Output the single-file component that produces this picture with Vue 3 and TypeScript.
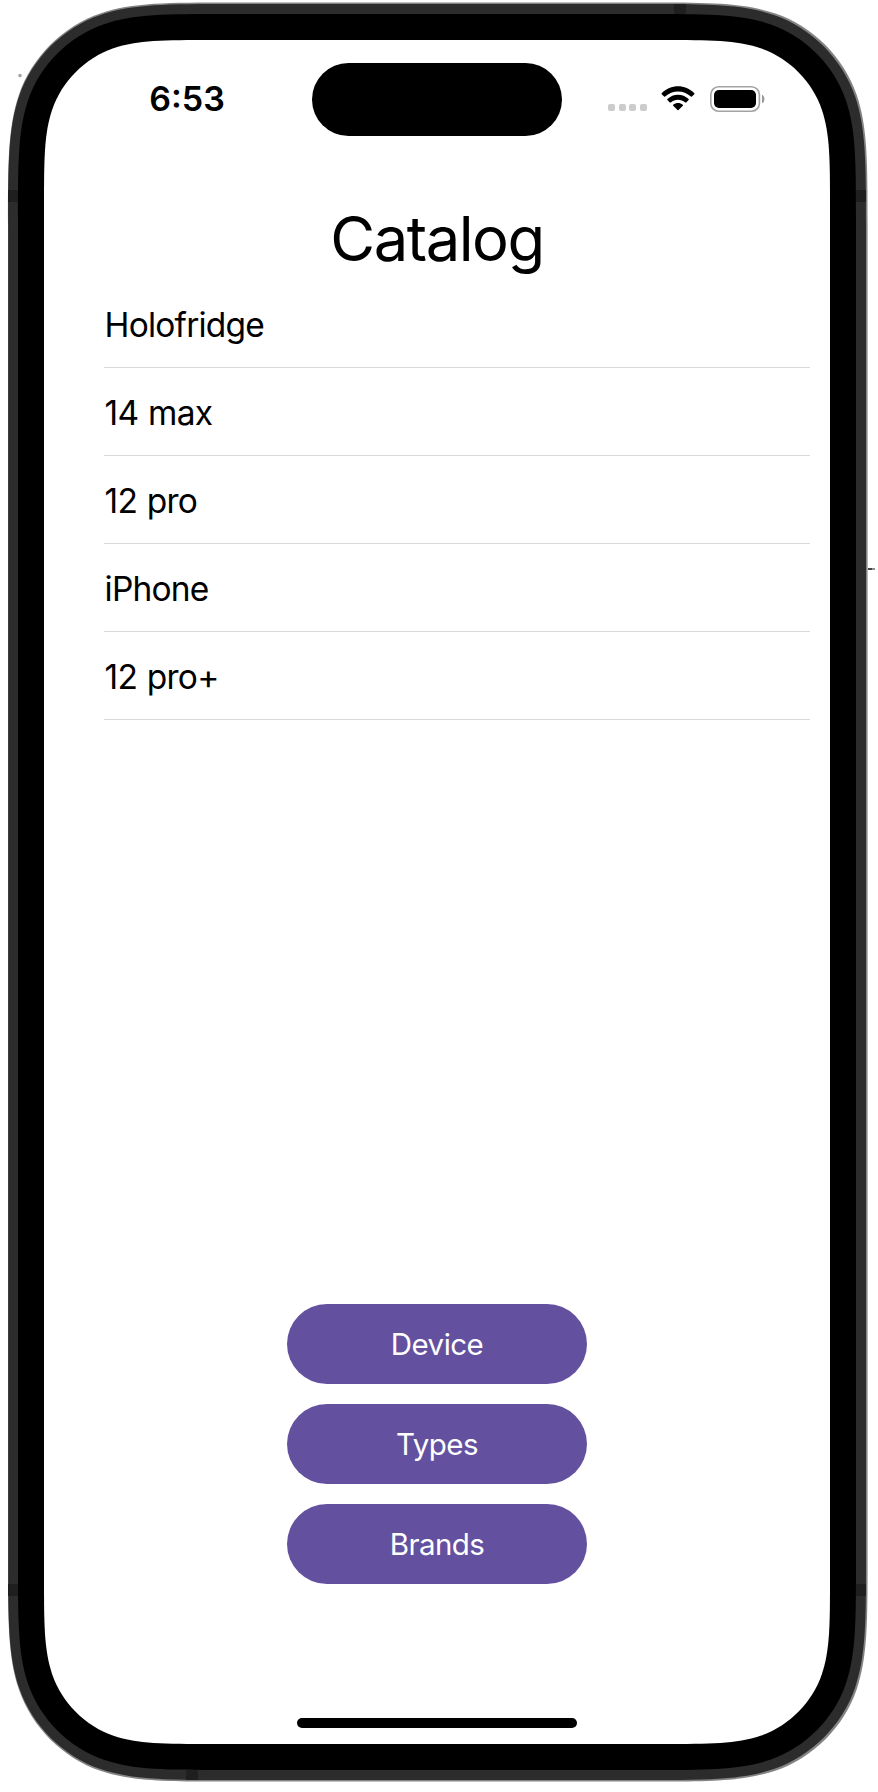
<script setup lang="ts">
interface Box { left: number; top: number; right: number; bottom: number }

const items: string[] = ['Holofridge', '14 max', '12 pro', 'iPhone', '12 pro+']
const actions: string[] = ['Device', 'Types', 'Brands']

// Continuous-curvature corner, expressed in multiples of the radius
// as [distance along the edge, distance away from the edge].
const corner: [number, number][] = [
  [1.52866, 0], [1.08849, 0], [0.8518, 0], [0.63149, 0.07491],
  [0.375, 0.1621], [0.1621, 0.375], [0.07491, 0.63149],
  [0, 0.8518], [0, 1.08849], [0, 1.52866],
]

function smoothRect(b: Box, r: number): string {
  const place = (sx: number, sy: number, flip: boolean): string[] => {
    const pts = flip ? [...corner].reverse() : corner
    return pts.map(([u, v]) => {
      const x = sx > 0 ? b.left + u * r : b.right - u * r
      const y = sy > 0 ? b.top + v * r : b.bottom - v * r
      return `${x.toFixed(2)} ${y.toFixed(2)}`
    })
  }
  const curve = (p: string[]): string => `${p[0]} C${p.slice(1).join(' ')}`
  return (
    `M${curve(place(1, 1, true))} L${curve(place(-1, 1, false))} ` +
    `L${curve(place(-1, -1, true))} L${curve(place(1, -1, false))} Z`
  )
}

const rim = smoothRect({ left: 8, top: 2.6, right: 867.6, bottom: 1781.6 }, 146)
const body = smoothRect({ left: 8.2, top: 4, right: 866, bottom: 1780 }, 146)
const bezel = smoothRect({ left: 18, top: 14, right: 856, bottom: 1770 }, 136)
const glass = smoothRect({ left: 44, top: 40, right: 830, bottom: 1744 }, 110)
</script>

<template>
  <main class="stage">
    <svg class="device" width="878" height="1792" viewBox="0 0 878 1792" aria-hidden="true">
      <circle cx="20" cy="75.6" r="1.8" fill="#a5a5a5" />
      <rect x="868" y="568" width="4" height="2" fill="#454545" />
      <rect x="872" y="568" width="3" height="2" fill="#909090" />
      <path :d="rim" fill="#858383" />
      <path :d="body" fill="#2c2c2c" />
      <g fill="#1f1f1f">
        <rect x="8" y="190" width="10" height="12" />
        <rect x="856" y="190" width="10" height="12" />
        <rect x="8" y="1584" width="10" height="12" />
        <rect x="856" y="1584" width="10" height="12" />
        <rect x="674" y="4" width="12" height="10" />
        <rect x="186" y="1770" width="12" height="10" />
      </g>
      <path :d="bezel" fill="#000" />
      <path :d="glass" fill="#fff" />
    </svg>

    <section class="screen">
      <header class="status">
        <span class="time">6:53</span>
        <span class="island"></span>
        <span class="indicators">
          <span class="signal"><i v-for="n in 4" :key="n"></i></span>
          <svg class="wifi" width="34" height="26" viewBox="0 0 34 26">
            <path d="M0.7 7.2 C9.6 -2 24.4 -2 33.3 7.2 Q33.7 7.7 33.3 8.2 L30.9 10.6 Q30.4 11 29.9 10.6 C22.7 3.7 11.3 3.7 4.1 10.6 Q3.6 11 3.1 10.6 L0.7 8.2 Q0.3 7.7 0.7 7.2 Z" />
            <path d="M6.4 13.1 C12.3 7.4 21.7 7.4 27.6 13.1 Q28 13.6 27.6 14.1 L25.2 16.4 Q24.7 16.8 24.2 16.4 C20.1 12.8 13.9 12.8 9.8 16.4 Q9.3 16.8 8.8 16.4 L6.4 14.1 Q6 13.6 6.4 13.1 Z" />
            <path d="M12.2 18.8 C15 16.5 19 16.5 21.8 18.8 Q22.3 19.3 21.8 19.8 L17.5 24.1 Q17 24.6 16.5 24.1 L12.2 19.8 Q11.7 19.3 12.2 18.8 Z" />
          </svg>
          <svg class="battery" width="56" height="26" viewBox="0 0 56 26">
            <rect x="0.8" y="0.8" width="48.6" height="24.4" rx="7.8" fill="none" stroke="#a3a3a3" stroke-width="1.6" />
            <rect x="4" y="4" width="42" height="18" rx="5" />
            <path d="M52 8.7 C55.2 10 55.2 16 52 17.3 Z" fill="#989898" />
          </svg>
        </span>
      </header>

      <h1 class="title">Catalog</h1>

      <ul class="list">
        <li v-for="item in items" :key="item">{{ item }}</li>
      </ul>

      <nav class="actions">
        <button v-for="action in actions" :key="action" type="button">{{ action }}</button>
      </nav>

      <div class="home"></div>
    </section>
  </main>
</template>

<style>
body {
  margin: 0;
  background: #fff;
}
</style>

<style scoped>
.stage {
  position: relative;
  box-sizing: border-box;
  width: 878px;
  height: 1792px;
  padding: 40px 48px 48px 44px;
  overflow: hidden;
  font-family: Inter, "Liberation Sans", sans-serif;
  color: #000;
}
.device {
  position: absolute;
  inset: 0;
}
.screen {
  position: relative;
  display: flex;
  flex-direction: column;
  align-items: center;
  width: 786px;
  height: 1704px;
}
.status {
  display: grid;
  grid-template-columns: 268px 250px 268px;
  align-items: center;
  width: 100%;
  height: 74px;
  margin-top: 22.5px;
}
.time {
  padding: 0 0 2px 18px;
  text-align: center;
  font-size: 34px;
  font-weight: 600;
  line-height: 40px;
}
.island {
  height: 73.5px;
  border-radius: 37px;
  background: #000;
}
.indicators {
  display: flex;
  align-items: center;
  padding: 0 0 2px 46px;
}
.signal {
  display: flex;
  gap: 3.7px;
  width: 39px;
  margin: 17px 14px 0 0;
}
.signal i {
  width: 7px;
  height: 7px;
  border-radius: 2px;
  background: #ccc;
}
.wifi {
  margin-right: 14.5px;
}
.title {
  margin: 63px 0 0;
  height: 80.5px;
  line-height: 78.5px;
  font-size: 61.5px;
  font-weight: 400;
  letter-spacing: -1.5px;
}
.list {
  align-self: stretch;
  margin: 0 20px 0 60px;
  padding: 0;
  list-style: none;
}
.list li {
  box-sizing: border-box;
  height: 88px;
  padding: 1px 0 0 0.6px;
  border-bottom: 1px solid #d9d9d9;
  font-size: 33.5px;
  line-height: 89.5px;
  letter-spacing: -0.8px;
  word-spacing: 1.2px;
}
.actions {
  display: flex;
  flex-direction: column;
  gap: 20px;
  margin-top: auto;
}
.actions button {
  width: 300px;
  height: 80px;
  padding: 0;
  border: 0;
  border-radius: 40px;
  background: #63519f;
  color: #fff;
  font: 400 29.5px/80px Inter, "Liberation Sans", sans-serif;
  letter-spacing: -0.55px;
}
.home {
  width: 280px;
  height: 10px;
  margin: 134px 0 16px;
  border-radius: 5px;
  background: #000;
}
</style>
